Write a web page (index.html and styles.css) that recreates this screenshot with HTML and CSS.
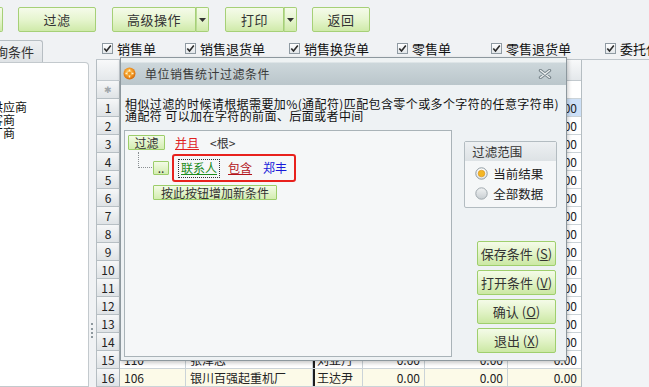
FILE: index.html
```html
<!DOCTYPE html>
<html lang="zh-CN">
<head>
<meta charset="utf-8">
<title>单位销售统计</title>
<link rel="stylesheet" href="styles.css">
</head>
<body>
<div class="toolbar">
  <div class="tbtn stub"></div>
  <div class="tbtn b-filter">过滤</div>
  <div class="split g-adv">
    <div class="tbtn seg w-adv">高级操作</div>
    <div class="tbtn dd"><svg width="7" height="4" viewBox="0 0 7 4"><polygon points="0,0 7,0 3.5,4" fill="#333"/></svg></div>
  </div>
  <div class="split g-print">
    <div class="tbtn seg w-print">打印</div>
    <div class="tbtn dd"><svg width="7" height="4" viewBox="0 0 7 4"><polygon points="0,0 7,0 3.5,4" fill="#333"/></svg></div>
  </div>
  <div class="tbtn b-back">返回</div>
</div>

<div class="main">
  <div class="leftcol">
    <div class="tab">查询条件</div>
    <div class="lpanel">
      <div class="litem">供应商</div>
      <div class="litem">客商</div>
      <div class="litem">厂商</div>
    </div>
  </div>
  <div class="splitter"><div class="grip"></div></div>
  <div class="rightcol">
    <div class="checks">
      <div class="chk w1"><span class="box"><svg width="9" height="9" viewBox="0 0 9 9"><path d="M1.3 4.4 L3.5 7 L7.8 1.4" fill="none" stroke="#2b2b2b" stroke-width="1.6"/></svg></span>销售单</div>
      <div class="chk w2"><span class="box"><svg width="9" height="9" viewBox="0 0 9 9"><path d="M1.3 4.4 L3.5 7 L7.8 1.4" fill="none" stroke="#2b2b2b" stroke-width="1.6"/></svg></span>销售退货单</div>
      <div class="chk w3"><span class="box"><svg width="9" height="9" viewBox="0 0 9 9"><path d="M1.3 4.4 L3.5 7 L7.8 1.4" fill="none" stroke="#2b2b2b" stroke-width="1.6"/></svg></span>销售换货单</div>
      <div class="chk w4"><span class="box"><svg width="9" height="9" viewBox="0 0 9 9"><path d="M1.3 4.4 L3.5 7 L7.8 1.4" fill="none" stroke="#2b2b2b" stroke-width="1.6"/></svg></span>零售单</div>
      <div class="chk w5"><span class="box"><svg width="9" height="9" viewBox="0 0 9 9"><path d="M1.3 4.4 L3.5 7 L7.8 1.4" fill="none" stroke="#2b2b2b" stroke-width="1.6"/></svg></span>零售退货单</div>
      <div class="chk w6"><span class="box"><svg width="9" height="9" viewBox="0 0 9 9"><path d="M1.3 4.4 L3.5 7 L7.8 1.4" fill="none" stroke="#2b2b2b" stroke-width="1.6"/></svg></span>委托代销单</div>
    </div>
    <div class="gridwrap">
      <div class="grid">
        <div class="row head"><div class="c rh"></div><div class="c">编号</div><div class="c">单位名称</div><div class="c">联系人</div><div class="c">销售</div><div class="c">退货</div><div class="c">金额</div></div>
        <div class="row"><div class="c rh star">✱</div><div class="c"></div><div class="c"></div><div class="c"></div><div class="c"></div><div class="c"></div><div class="c"></div></div>
        <div class="row sel"><div class="c rh">1</div><div class="c">101</div><div class="c">宁夏永盛机电公司</div><div class="c ct">李明</div><div class="c n">0.00</div><div class="c n">0.00</div><div class="c n">0.00</div></div>
        <div class="row"><div class="c rh">2</div><div class="c">102</div><div class="c">银川金达商贸</div><div class="c ct">张华</div><div class="c n">0.00</div><div class="c n">0.00</div><div class="c n">0.00</div></div>
        <div class="row"><div class="c rh">3</div><div class="c">103</div><div class="c">石嘴山宏达机械</div><div class="c ct">王强</div><div class="c n">0.00</div><div class="c n">0.00</div><div class="c n">0.00</div></div>
        <div class="row"><div class="c rh">4</div><div class="c">104</div><div class="c">吴忠市联合物资</div><div class="c ct">郑丰</div><div class="c n">0.00</div><div class="c n">0.00</div><div class="c n">0.00</div></div>
        <div class="row"><div class="c rh">5</div><div class="c">105</div><div class="c">固原五金商行</div><div class="c ct">马亮</div><div class="c n">0.00</div><div class="c n">0.00</div><div class="c n">0.00</div></div>
        <div class="row"><div class="c rh">6</div><div class="c">107</div><div class="c">中卫建材市场</div><div class="c ct">杨军</div><div class="c n">0.00</div><div class="c n">0.00</div><div class="c n">0.00</div></div>
        <div class="row"><div class="c rh">7</div><div class="c">108</div><div class="c">灵武电器城</div><div class="c ct">赵刚</div><div class="c n">0.00</div><div class="c n">0.00</div><div class="c n">0.00</div></div>
        <div class="row"><div class="c rh">8</div><div class="c">109</div><div class="c">贺兰机电设备</div><div class="c ct">刘伟</div><div class="c n">0.00</div><div class="c n">0.00</div><div class="c n">0.00</div></div>
        <div class="row"><div class="c rh">9</div><div class="c">111</div><div class="c">永宁起重配件</div><div class="c ct">孙涛</div><div class="c n">0.00</div><div class="c n">0.00</div><div class="c n">0.00</div></div>
        <div class="row"><div class="c rh">10</div><div class="c">112</div><div class="c">平罗物流公司</div><div class="c ct">周平</div><div class="c n">0.00</div><div class="c n">0.00</div><div class="c n">0.00</div></div>
        <div class="row"><div class="c rh">11</div><div class="c">113</div><div class="c">青铜峡贸易</div><div class="c ct">吴斌</div><div class="c n">0.00</div><div class="c n">0.00</div><div class="c n">0.00</div></div>
        <div class="row"><div class="c rh">12</div><div class="c">114</div><div class="c">大武口钢材</div><div class="c ct">陈晨</div><div class="c n">0.00</div><div class="c n">0.00</div><div class="c n">0.00</div></div>
        <div class="row"><div class="c rh">13</div><div class="c">115</div><div class="c">惠农液压件</div><div class="c ct">何东</div><div class="c n">0.00</div><div class="c n">0.00</div><div class="c n">0.00</div></div>
        <div class="row"><div class="c rh">14</div><div class="c">116</div><div class="c">西夏区五交化</div><div class="c ct">高飞</div><div class="c n">0.00</div><div class="c n">0.00</div><div class="c n">0.00</div></div>
        <div class="row"><div class="c rh">15</div><div class="c">110</div><div class="c">张泽志</div><div class="c ct">刘亚丹</div><div class="c n">0.00</div><div class="c n">0.00</div><div class="c n">0.00</div></div>
        <div class="row alt"><div class="c rh">16</div><div class="c">106</div><div class="c">银川百强起重机厂</div><div class="c ct">王达尹</div><div class="c n">0.00</div><div class="c n">0.00</div><div class="c n">0.00</div></div>
      </div>
    </div>
  </div>
</div>

<div class="dialog">
  <div class="dtitle">
    <svg class="dicon" width="13" height="13" viewBox="0 0 13 13">
      <defs><radialGradient id="ig" cx="0.45" cy="0.4" r="0.6"><stop offset="0" stop-color="#ffe9a6"/><stop offset="0.45" stop-color="#f7a531"/><stop offset="1" stop-color="#d66a08"/></radialGradient></defs>
      <circle cx="6.5" cy="6.5" r="6" fill="url(#ig)"/>
      <path d="M6.5 2.5 V10.5 M2.5 6.5 H10.5" stroke="#fff4cf" stroke-width="1.4"/>
      <circle cx="6.5" cy="6.5" r="2" fill="#f39a22"/>
    </svg>
    <span class="dtext">单位销售统计过滤条件</span>
    <svg class="dclose" width="14" height="10" viewBox="0 0 14 10">
      <path d="M2.5 1.5 L11.5 8.5 M11.5 1.5 L2.5 8.5" stroke="#7c888e" stroke-width="3.4" stroke-linecap="round"/>
      <path d="M2.5 1.5 L11.5 8.5 M11.5 1.5 L2.5 8.5" stroke="#eef1f2" stroke-width="1.2" stroke-linecap="round"/>
    </svg>
  </div>
  <div class="dbody">
    <p class="hint">相似过滤的时候请根据需要加%(通配符)匹配包含零个或多个字符的任意字符串)<br>通配符 可以加在字符的前面、后面或者中间</p>
    <div class="dcontent">
      <div class="tree">
        <div class="trow1">
          <div class="sbtn b-f">过滤</div>
          <span class="lk and">并且</span>
          <span class="root">&lt;根&gt;</span>
        </div>
        <div class="trow2">
          <div class="conn"></div>
          <div class="sbtn b-dots">..</div>
          <div class="hl">
            <span class="lk field">联系人</span>
            <span class="lk op">包含</span>
            <span class="val">郑丰</span>
          </div>
        </div>
        <div class="trow3">
          <div class="sbtn b-add">按此按钮增加新条件</div>
        </div>
      </div>
      <div class="dright">
        <div class="grp">
          <div class="grp-h">过滤范围</div>
          <div class="radio">
            <svg width="13" height="13" viewBox="0 0 13 13"><defs><linearGradient id="r1" x1="0" y1="0" x2="0" y2="1"><stop offset="0" stop-color="#ffffff"/><stop offset="1" stop-color="#dfe3e6"/></linearGradient></defs><circle cx="6.5" cy="6.5" r="5.7" fill="url(#r1)" stroke="#8e999f"/><circle cx="6.5" cy="6.5" r="3.3" fill="#f3b626" stroke="#d7901a" stroke-width="0.6"/></svg>
            <span>当前结果</span>
          </div>
          <div class="radio">
            <svg width="13" height="13" viewBox="0 0 13 13"><defs><linearGradient id="r2" x1="0" y1="0" x2="0" y2="1"><stop offset="0" stop-color="#f1f3f4"/><stop offset="1" stop-color="#c7cdd1"/></linearGradient></defs><circle cx="6.5" cy="6.5" r="5.7" fill="url(#r2)" stroke="#a0a9ae"/></svg>
            <span>全部数据</span>
          </div>
        </div>
        <div class="dbtns">
          <div class="dbtn">保存条件 (<u>S</u>)</div>
          <div class="dbtn">打开条件 (<u>V</u>)</div>
          <div class="dbtn">确认 (<u>O</u>)</div>
          <div class="dbtn">退出 (<u>X</u>)</div>
        </div>
      </div>
    </div>
  </div>
</div>
</body>
</html>
```

FILE: styles.css
```css
* { box-sizing: border-box; }
html, body { margin: 0; padding: 0; }
body {
  width: 649px;
  height: 387px;
  overflow: hidden;
  position: relative;
  background: #f0f2f4;
  font-family: "Noto Sans CJK SC", "Noto Sans", sans-serif;
  font-size: 12px;
  color: #222;
}

/* toolbar */
.toolbar { display: flex; align-items: flex-start; height: 38px; padding-top: 7px; }
.tbtn {
  height: 25px;
  border: 1px solid #a6d077;
  border-radius: 2px;
  background: linear-gradient(#f5fbea, #e6f5cf 50%, #cfeaa9);
  display: flex; align-items: center; justify-content: center;
  font-size: 13px; letter-spacing: 0.5px; color: #333; line-height: 23px;
}
.stub { width: 4px; margin-left: -1px; border-left: none; border-radius: 0 2px 2px 0; }
.b-filter { width: 78px; margin-left: 15px; }
.split { display: flex; }
.split .seg { border-radius: 2px 0 0 2px; }
.split .dd { width: 13px; border-left: none; border-radius: 0 2px 2px 0; box-shadow: inset 1px 0 0 #b9db94; }
.g-adv { margin-left: 16px; }
.w-adv { width: 84px; }
.g-print { margin-left: 16px; }
.w-print { width: 59px; }
.b-back { width: 58px; margin-left: 15px; }

/* main */
.main { display: flex; height: 349px; }
.leftcol { width: 89px; overflow: hidden; padding-top: 2px; display: flex; flex-direction: column; }
.tab {
  margin-left: -26px; width: 69px; height: 22px;
  border: 1px solid #b7bec3; border-bottom: none; border-radius: 0 3px 0 0;
  background: linear-gradient(#eef0f2, #dfe3e6);
  font-size: 13px; line-height: 21px; padding-left: 7px; color: #333; white-space: nowrap;
}
.lpanel {
  flex: 1; background: #fff;
  border: 1px solid #c3c9cd; border-left: none; border-radius: 0 4px 0 0;
  padding-top: 37px;
}
.litem { margin-left: -9px; line-height: 13px; font-size: 12px; color: #111; white-space: nowrap; }
.splitter { width: 7px; }
.grip { margin-top: 285px; margin-left: 2px; height: 15px; border-left: 2px dotted #8e989e; }
.rightcol { flex: 1; display: flex; flex-direction: column; min-width: 0; }
.checks { height: 25px; display: flex; padding-left: 6px; padding-top: 5px; white-space: nowrap; overflow: hidden; }
.chk { display: flex; align-items: flex-start; font-size: 13px; line-height: 12px; color: #111; flex: none; }
.box {
  width: 11px; height: 11px; border: 1px solid #8f9aa2; background: linear-gradient(#ffffff, #e3e7ea);
  display: flex; align-items: center; justify-content: center; margin-right: 4px; flex: none;
}
.w1 { width: 83px; } .w2 { width: 104px; } .w3 { width: 108px; } .w4 { width: 94px; } .w5 { width: 114px; }

.gridwrap { flex: 1; border-top: 1px solid #bfc6cb; background: #f2f4f6; }
.grid { width: 486px; border-left: 1px solid #b5bdc2; border-right: 1px solid #b5bdc2; height: 100%; }
.row { display: grid; grid-template-columns: 23px 66px 127px 50px 62px 83px 73px; height: 18px; background: #fff; }
.row.head { height: 21px; background: linear-gradient(#f8f9fa, #e3e7ea); }
.c {
  border-right: 1px solid #cbd3d8; border-bottom: 1px solid #cbd3d8;
  padding: 0 4px; line-height: 17px; white-space: nowrap; overflow: hidden; font-size: 12px; color: #222;
}
.c:last-child { border-right: none; }
.head .c { text-align: center; line-height: 20px; border-color: #c2c9ce; }
.rh { background: linear-gradient(#f6f7f8, #dfe3e6); border-right-color: #a9b1b6; border-bottom-color: #b7bfc4; text-align: center; padding: 0; }
.head .rh { background: transparent; }
.star { color: #a0a6aa; font-size: 9px; }
.sel { background: #cde0f7; }
.alt { background: #fcfae8; }
.n { text-align: right; }
.ct { box-shadow: inset 2px 0 0 #1e1e1e; padding-left: 4px; }

/* dialog */
.dialog {
  position: absolute; left: 120px; top: 57px; width: 447px; height: 304px;
  border: 1px solid #8d989e; background: #eef2f4;
  box-shadow: 1px 2px 4px rgba(0, 0, 0, 0.22);
  display: flex; flex-direction: column;
}
.dtitle {
  height: 27px; flex: none; display: flex; align-items: center;
  padding: 4px 0 0 2px;
  background: linear-gradient(#eef2f3 0, #eef2f3 4px, #cdd7db 5px, #bac6cb 100%);
}
.dicon { flex: none; }
.dtext { margin-left: 9px; font-size: 12px; letter-spacing: 0.5px; color: #3a3a3a; line-height: 14px; }
.dclose { margin-left: auto; margin-right: 14px; }
.dbody { flex: 1; padding: 13px 9px 0 3px; display: flex; flex-direction: column; }
.hint { margin: 0; padding-left: 1px; font-size: 12px; line-height: 12px; letter-spacing: 0.4px; white-space: nowrap; color: #111; }
.dcontent { display: flex; margin-top: 8px; height: 227px; }
.tree { width: 329px; border: 1px solid #a9b3b8; background: #f5f7f8; padding: 4px 3px; }
.sbtn {
  border: 1px solid #9ccd6a; background: linear-gradient(#f3fbe6, #d3edb0);
  font-size: 12px; line-height: 13px; color: #333; text-align: center; border-radius: 1px; flex: none;
}
.trow1 { display: flex; align-items: center; height: 15px; }
.b-f { width: 37px; height: 15px; }
.lk { text-decoration: underline; line-height: 14px; }
.and { color: #e0211e; margin-left: 10px; }
.root { margin-left: 11px; color: #333; line-height: 14px; }
.trow2 { display: flex; align-items: center; height: 28px; margin-top: 4px; }
.conn { align-self: flex-start; margin-top: -2px; margin-left: 10px; width: 14px; height: 16px; border-left: 1px dotted #8a8f92; border-bottom: 1px dotted #8a8f92; flex: none; }
.b-dots { width: 16px; height: 14px; margin-left: 1px; line-height: 11px; }
.hl { margin-left: 3px; width: 124px; height: 28px; border: 2px solid #e8211d; border-radius: 3px; display: flex; align-items: center; padding-left: 4px; }
.field { color: #1b8a1b; border: 1px dotted #333; padding: 1px 2px 2px; line-height: 14px; }
.op { color: #b3141b; margin-left: 8px; }
.val { color: #1818d8; margin-left: 11px; line-height: 14px; }
.trow3 { margin-top: 3px; padding-left: 25px; display: flex; }
.b-add { width: 124px; height: 15px; }

.dright { width: 93px; margin-left: 12px; display: flex; flex-direction: column; justify-content: space-between; }
.grp { margin-top: 11px; height: 67px; border: 1px solid #b3bcc1; border-radius: 2px; background: #f5f7f8; }
.grp-h { height: 19px; background: linear-gradient(#edf0f2, #dde2e5); padding-left: 7px; line-height: 19px; font-size: 12.5px; color: #333; }
.radio { display: flex; align-items: center; height: 20px; padding-left: 10px; font-size: 12.5px; color: #222; }
.grp-h + .radio { margin-top: 2px; }
.radio svg { margin-right: 5px; flex: none; }
.dbtns { display: flex; flex-direction: column; align-items: flex-end; gap: 4px; margin-bottom: 4px; }
.dbtn {
  width: 79px; height: 25px; margin-right: 1px;
  border: 1px solid #9fcf6d; border-radius: 2px;
  background: linear-gradient(#f4fbe8, #e2f3c8 50%, #cbe8a3);
  display: flex; align-items: center; justify-content: center;
  font-size: 13px; color: #333; line-height: 23px; white-space: nowrap;
}
.dbtn u { text-decoration: underline; }
```
